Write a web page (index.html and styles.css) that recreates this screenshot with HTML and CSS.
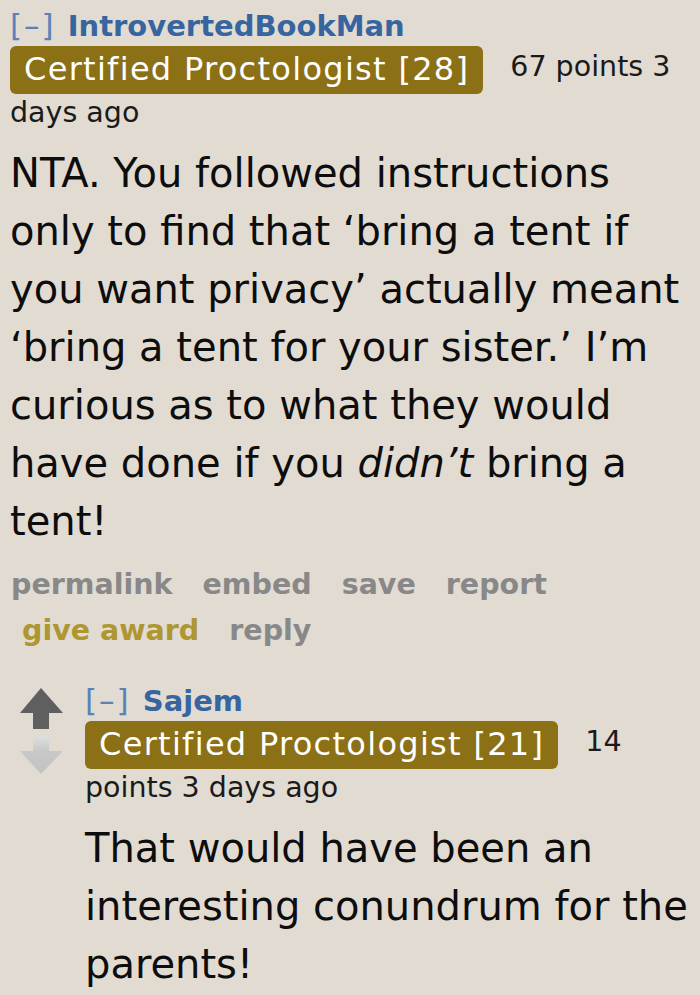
FILE: index.html
```html
<!DOCTYPE html>
<html lang="en">
<head>
<meta charset="utf-8">
<title>Comment thread</title>
<link rel="stylesheet" href="styles.css">
</head>
<body>
<div class="comment top">
  <p class="tagline"><a class="expand">[–]</a> <a class="author">IntrovertedBookMan</a> <span class="flair">Certified Proctologist [28]</span><span class="score">67 points</span> <time>3 days ago</time></p>
  <div class="md md-first">
    <p>NTA. You followed instructions only to find that ‘bring a tent if you want privacy’ actually meant ‘bring a tent for your sister.’ I’m curious as to what they would have done if you <em>didn’t</em> bring a tent!</p>
  </div>
  <ul class="buttons">
    <li><a>permalink</a></li>
    <li><a>embed</a></li>
    <li><a>save</a></li>
    <li><a>report</a></li>
    <li class="award"><a>give award</a></li>
    <li><a>reply</a></li>
  </ul>
  <div class="child">
    <div class="comment reply-comment">
      <div class="midcol">
        <svg class="arrow" width="44" height="88" viewBox="0 0 44 88" aria-hidden="true">
          <defs>
            <linearGradient id="downfade" x1="0" y1="0" x2="0" y2="1">
              <stop offset="0" stop-color="#dedede"/>
              <stop offset="0.4" stop-color="#c8c8c8"/>
              <stop offset="1" stop-color="#c2c2c2"/>
            </linearGradient>
          </defs>
          <polygon points="0,25 21,0 43,25 29,25 29,41 13,41 13,25" fill="#5f5f5f"/>
          <polygon points="13,48 29,48 29,63 43,63 21,86 0,63 13,63" fill="url(#downfade)"/>
        </svg>
      </div>
      <div class="entry">
        <p class="tagline"><a class="expand">[–]</a> <a class="author">Sajem</a> <span class="flair">Certified Proctologist [21]</span><span class="score">14 points</span> <time>3 days ago</time></p>
        <div class="md md-reply">
          <p>That would have been an interesting conundrum for the parents!</p>
        </div>
      </div>
    </div>
  </div>
</div>
</body>
</html>
```

FILE: styles.css
```css
html, body {
  margin: 0;
  padding: 0;
  background: #e1dbd2;
}

body {
  font-family: "DejaVu Sans", Verdana, sans-serif;
  color: #111;
  overflow: hidden;
}

.comment.top {
  padding: 8px 0 0 10px;
}

.tagline {
  margin: 0;
  font-size: 28.5px;
  line-height: 38px;
  color: #1a1a1a;
}

.expand {
  color: #5a82b8;
  font-size: 31px;
  line-height: 1;
  letter-spacing: 2px;
  margin-right: 3px;
}

.author {
  color: #36659f;
  font-weight: bold;
  font-size: 29px;
  line-height: 1;
}

.flair {
  display: inline-block;
  background: #8b7016;
  color: #ffffff;
  font-size: 32px;
  line-height: 36px;
  letter-spacing: 1.3px;
  padding: 5px 14px 7px 14px;
  border-radius: 6px;
  margin-right: 27px;
  vertical-align: -4px;
}

.md {
  margin-top: 12px;
}

.md p {
  margin: 0;
}

.md-first {
  font-size: 40px;
  line-height: 58px;
  color: #0d0d0d;
}

.md-reply {
  font-size: 40px;
  line-height: 58px;
  color: #0d0d0d;
}

.buttons {
  list-style: none;
  margin: 12px 0 0 0;
  padding: 0 0 0 1px;
  display: flex;
  flex-wrap: wrap;
  column-gap: 30px;
  font-size: 28.5px;
  line-height: 46px;
  font-weight: bold;
  width: 640px;
}

.buttons a {
  color: #888888;
}

.buttons .award {
  margin-left: 11px;
}

.buttons .award a {
  color: #ae9630;
}

.child {
  margin-top: 23px;
  padding-left: 10px;
}

.reply-comment {
  display: flex;
  align-items: flex-start;
}

.midcol {
  width: 44px;
  margin-right: 21px;
  flex: none;
}

.arrow {
  display: block;
  margin-top: 11px;
}

.entry {
  padding-top: 6px;
  flex: 1;
  min-width: 0;
}
```
